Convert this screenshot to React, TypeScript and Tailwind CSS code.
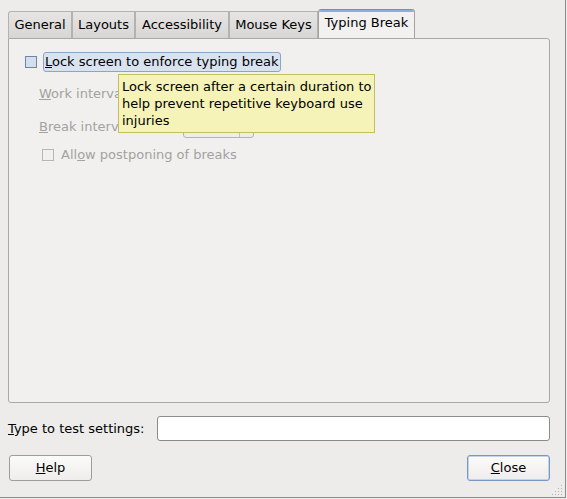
import React from "react";

const font = { fontFamily: '"DejaVu Sans", sans-serif' };

function Tab({ label, w, active }: { label: string; w: string; active?: boolean }) {
  if (active) {
    return (
      <div className={`relative -mb-px flex h-[30px] items-center justify-center self-end rounded-t-[3px] border border-b-0 border-[#a3a2a1] border-t-[#6d93c6] bg-[#f2f1f0] pb-[3px] text-[13px] text-black ${w}`}>
        <div className="absolute left-0 right-0 top-0 h-[2px] rounded-t-[3px] bg-[#8aaee0]" />
        {label}
      </div>
    );
  }
  return (
    <div className={`flex h-[27px] items-center justify-center self-end border border-b-0 border-[#b3b2b1] bg-gradient-to-b from-[#e6e5e4] to-[#d7d6d5] text-[13px] text-black first:rounded-tl-[3px] ${w}`}>
      {label}
    </div>
  );
}

export default function App() {
  return (
    <div
      className="relative h-[499px] w-[567px] overflow-hidden bg-[#edeceb] text-black"
      style={font}
    >
      <div className="flex h-[498px] w-[566px] flex-col border-b border-r border-[#8c8b8a] pl-[8px] pr-[15px] pt-[7px]">
        {/* Tabs */}
        <div className="flex h-[31px] items-end">
          <Tab label="General" w="w-[64px]" />
          <Tab label="Layouts" w="w-[63px]" />
          <Tab label="Accessibility" w="w-[94px]" />
          <Tab label="Mouse Keys" w="w-[89px]" />
          <Tab label="Typing Break" w="w-[97px]" active />
        </div>
        {/* Panel */}
        <div className="relative h-[365px] rounded-b-[3px] rounded-tr-[3px] border border-[#a9a8a7] bg-[#f1f0ef]">
          <div className="flex flex-col pl-[16px] pt-[13px]">
            <div className="flex items-center gap-[6px]">
              <div className="h-[12px] w-[12px] border border-[#6c86a8] bg-[#d3deee]" />
              <div className="flex h-[20px] items-center rounded-[3px] border border-[#8ca4c6] bg-[#d9e3f0] px-[1px] text-[13px]">
                <span>
                  <span className="underline">L</span>ock screen to enforce typing break
                </span>
              </div>
            </div>
            <div className="mt-[11px] flex h-[22px] items-center pl-[14px] text-[13px] text-[#a3a2a0]">
              <span>
                <span className="underline">W</span>ork interval lasts:
              </span>
            </div>
            <div className="mt-[11px] flex h-[22px] items-center pl-[14px] text-[13px] text-[#a3a2a0]">
              <span className="w-[144px]">
                <span className="underline">B</span>reak interval lasts:
              </span>
              <div className="flex h-[21px] w-[71px] rounded-[3px] border border-[#b5b4b3] bg-[#eeedec]">
                <div className="flex-1" />
                <div className="w-[14px] border-l border-[#c2c1c0]" />
              </div>
            </div>
            <div className="mt-[7px] flex h-[20px] items-center gap-[7px] pl-[17px] text-[13px] text-[#a3a2a0]">
              <div className="h-[12px] w-[12px] border border-[#b8b7b6] bg-[#f1f0ef]" />
              <span>
                All<span className="underline">o</span>w postponing of breaks
              </span>
            </div>
          </div>
          {/* Tooltip */}
          <div className="absolute left-[109px] top-[35px] flex h-[59px] w-[257px] flex-col justify-center whitespace-nowrap border border-[#c4bf5e] bg-[#f5f3b7] pl-[3px] text-[13px] leading-[17px] text-black">
            <span>Lock screen after a certain duration to</span>
            <span>help prevent repetitive keyboard use</span>
            <span>injuries</span>
          </div>
        </div>
        {/* Test entry */}
        <div className="mt-[13px] flex items-center">
          <span className="w-[149px] text-[13px]">
            <span className="underline">T</span>ype to test settings:
          </span>
          <div className="h-[25px] flex-1 rounded-[3px] border border-[#8c8b8a] bg-white" />
        </div>
        {/* Buttons */}
        <div className="mt-[14px] flex items-center justify-between pl-[1px]">
          <div className="flex h-[26px] w-[83px] items-center justify-center rounded-[3px] border border-[#9e9d9c] bg-gradient-to-b from-[#fbfbfa] to-[#eeedec] text-[13px]">
            <span>
              <span className="underline">H</span>elp
            </span>
          </div>
          <div className="flex h-[26px] w-[83px] items-center justify-center rounded-[3px] border border-[#7b98c4] bg-gradient-to-b from-[#fbfbfa] to-[#eeedec] text-[13px] shadow-[inset_0_0_0_1px_#c4d3ea]">
            <span>
              <span className="underline">C</span>lose
            </span>
          </div>
        </div>
      </div>
      {/* resize grip */}
      <svg className="absolute bottom-[3px] right-[3px]" width="12" height="12" viewBox="0 0 12 12">
        {[
          [10, 2], [10, 5], [7, 5], [10, 8], [7, 8], [4, 8], [10, 11], [7, 11], [4, 11], [1, 11],
        ].map(([x, y], i) => (
          <rect key={i} x={x - 1} y={y - 1} width="1" height="1" fill="#b5b4b3" />
        ))}
      </svg>
    </div>
  );
}
